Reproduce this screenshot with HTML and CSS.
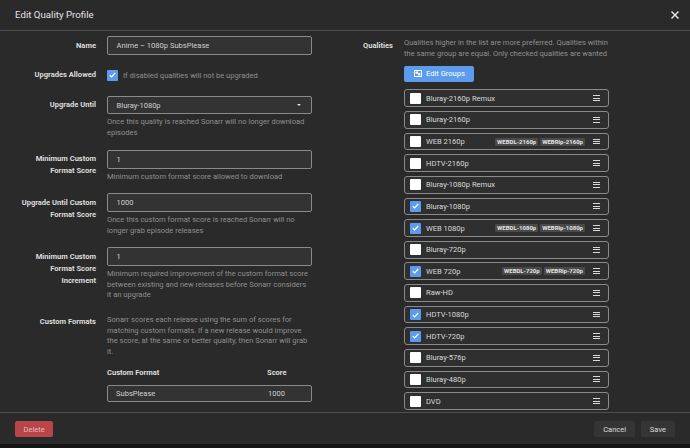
FILE: index.html
```html
<!DOCTYPE html>
<html lang="en">
<head>
<meta charset="utf-8">
<title>Edit Quality Profile</title>
<link rel="stylesheet" href="styles.css">
</head>
<body>
<div class="modal">
  <header class="modal-header">
    <h1 class="modal-title">Edit Quality Profile</h1>
    <button class="close" aria-label="Close">
      <svg width="8" height="8" viewBox="0 0 8 8"><path d="M1 1L7 7M7 1L1 7" stroke="#e8e8e8" stroke-width="1.4" stroke-linecap="square"/></svg>
    </button>
  </header>

  <div class="modal-body" id="modal-body">
    <div class="columns">
      <div class="col">
        <div class="group">
          <div class="label">Name</div>
          <div class="control"><div class="input">Anime – 1080p SubsPlease</div></div>
        </div>

        <div class="group">
          <div class="label">Upgrades Allowed</div>
          <div class="control check-control">
            <span class="checkbox checked"><svg width="7" height="6" viewBox="0 0 7 6"><path d="M0.8 3.2L2.7 5L6.2 1" fill="none" stroke="#fff" stroke-width="1.2"/></svg></span>
            <span class="help-inline">If disabled qualities will not be upgraded</span>
          </div>
        </div>

        <div class="group">
          <div class="label">Upgrade Until</div>
          <div class="control">
            <div class="input select"><span>Bluray-1080p</span><span class="caret"></span></div>
            <div class="help">Once this quality is reached Sonarr will no longer download episodes</div>
          </div>
        </div>

        <div class="group">
          <div class="label">Minimum Custom Format Score</div>
          <div class="control">
            <div class="input">1</div>
            <div class="help">Minimum custom format score allowed to download</div>
          </div>
        </div>

        <div class="group">
          <div class="label">Upgrade Until Custom Format Score</div>
          <div class="control">
            <div class="input">1000</div>
            <div class="help">Once this custom format score is reached Sonarr will no longer grab episode releases</div>
          </div>
        </div>

        <div class="group">
          <div class="label">Minimum Custom Format Score Increment</div>
          <div class="control">
            <div class="input">1</div>
            <div class="help">Minimum required improvement of the custom format score between existing and new releases before Sonarr considers it an upgrade</div>
          </div>
        </div>

        <div class="group">
          <div class="label">Custom Formats</div>
          <div class="control">
            <div class="help">Sonarr scores each release using the sum of scores for matching custom formats. If a new release would improve the score, at the same or better quality, then Sonarr will grab it.</div>
            <div class="cf-head"><span>Custom Format</span><span>Score</span></div>
            <div class="cf-row"><span>SubsPlease</span><span>1000</span></div>
          </div>
        </div>
      </div>

      <div class="col">
        <div class="group">
          <div class="label">Qualities</div>
          <div class="control">
            <div class="help help-top">Qualities higher in the list are more preferred. Qualities within the same group are equal. Only checked qualities are wanted</div>
            <button class="btn-primary">
              <svg width="8" height="7" viewBox="0 0 8 7"><rect x="0.5" y="0.5" width="7" height="6" fill="none" stroke="#fff" stroke-width="1"/><rect x="1.6" y="1.5" width="2.6" height="2.2" fill="#fff"/><rect x="4" y="3.2" width="2.4" height="2.2" fill="#fff"/></svg>
              Edit Groups
            </button>
            <ul class="qualities">
              <li class="q"><span class="checkbox"></span><span class="q-name">Bluray-2160p Remux</span><span class="handle"></span></li>
              <li class="q"><span class="checkbox"></span><span class="q-name">Bluray-2160p</span><span class="handle"></span></li>
              <li class="q"><span class="checkbox"></span><span class="q-name">WEB 2160p</span><span class="tags"><span class="tag">WEBDL-2160p</span><span class="tag">WEBRip-2160p</span></span><span class="handle"></span></li>
              <li class="q"><span class="checkbox"></span><span class="q-name">HDTV-2160p</span><span class="handle"></span></li>
              <li class="q"><span class="checkbox"></span><span class="q-name">Bluray-1080p Remux</span><span class="handle"></span></li>
              <li class="q"><span class="checkbox checked"><svg width="7" height="6" viewBox="0 0 7 6"><path d="M0.8 3.2L2.7 5L6.2 1" fill="none" stroke="#fff" stroke-width="1.2"/></svg></span><span class="q-name">Bluray-1080p</span><span class="handle"></span></li>
              <li class="q"><span class="checkbox checked"><svg width="7" height="6" viewBox="0 0 7 6"><path d="M0.8 3.2L2.7 5L6.2 1" fill="none" stroke="#fff" stroke-width="1.2"/></svg></span><span class="q-name">WEB 1080p</span><span class="tags"><span class="tag">WEBDL-1080p</span><span class="tag">WEBRip-1080p</span></span><span class="handle"></span></li>
              <li class="q"><span class="checkbox"></span><span class="q-name">Bluray-720p</span><span class="handle"></span></li>
              <li class="q"><span class="checkbox checked"><svg width="7" height="6" viewBox="0 0 7 6"><path d="M0.8 3.2L2.7 5L6.2 1" fill="none" stroke="#fff" stroke-width="1.2"/></svg></span><span class="q-name">WEB 720p</span><span class="tags"><span class="tag">WEBDL-720p</span><span class="tag">WEBRip-720p</span></span><span class="handle"></span></li>
              <li class="q"><span class="checkbox"></span><span class="q-name">Raw-HD</span><span class="handle"></span></li>
              <li class="q"><span class="checkbox checked"><svg width="7" height="6" viewBox="0 0 7 6"><path d="M0.8 3.2L2.7 5L6.2 1" fill="none" stroke="#fff" stroke-width="1.2"/></svg></span><span class="q-name">HDTV-1080p</span><span class="handle"></span></li>
              <li class="q"><span class="checkbox checked"><svg width="7" height="6" viewBox="0 0 7 6"><path d="M0.8 3.2L2.7 5L6.2 1" fill="none" stroke="#fff" stroke-width="1.2"/></svg></span><span class="q-name">HDTV-720p</span><span class="handle"></span></li>
              <li class="q"><span class="checkbox"></span><span class="q-name">Bluray-576p</span><span class="handle"></span></li>
              <li class="q"><span class="checkbox"></span><span class="q-name">Bluray-480p</span><span class="handle"></span></li>
              <li class="q"><span class="checkbox"></span><span class="q-name">DVD</span><span class="handle"></span></li>
            </ul>
          </div>
        </div>
      </div>
    </div>
  </div>

  <footer class="modal-footer">
    <button class="btn btn-danger">Delete</button>
    <button class="btn">Cancel</button>
    <button class="btn">Save</button>
  </footer>
</div>
<script src="script.js"></script>
</body>
</html>
```

FILE: styles.css
```css
* { box-sizing: border-box; }
html, body { margin: 0; height: 100%; }
body {
  background: #141414;
  font-family: Roboto, "Noto Sans", "Liberation Sans", sans-serif;
  font-size: 7.56px;
  color: #cccccc;
  overflow: hidden;
}
button { font: inherit; color: inherit; border: 0; cursor: pointer; }

.modal {
  height: 444px;
  background: #2a2a2a;
  display: flex;
  flex-direction: column;
}

.modal-header {
  flex: none;
  height: 31px;
  border-bottom: 1px solid #4e4e4e;
  display: flex;
  align-items: center;
  justify-content: space-between;
  padding: 0 11px 0 15px;
}
.modal-title {
  margin: 0;
  font-size: 9.7px;
  font-weight: 400;
  line-height: 12px;
  color: #e4e4e4;
}
.close {
  background: none;
  padding: 0;
  width: 8px;
  height: 8px;
  display: flex;
}

.modal-body {
  flex: none;
  height: 381px;
  overflow-y: auto;
  padding: 16.2px 0 16.2px 15px;
}
.modal-body::-webkit-scrollbar { width: 6px; }
.modal-body::-webkit-scrollbar-track { background: #2a2a2a; }
.modal-body::-webkit-scrollbar-thumb {
  background: #6e6e6e;
  border-left: 2px solid #2a2a2a;
}
.modal-body::-webkit-scrollbar-button:single-button:vertical {
  height: 6px;
  background-color: #2a2a2a;
  background-repeat: no-repeat;
}
.modal-body::-webkit-scrollbar-button:single-button:vertical:decrement {
  background-image:
    linear-gradient(to bottom right, transparent 50%, #9a9a9a 50%),
    linear-gradient(to bottom left, transparent 50%, #9a9a9a 50%);
  background-size: 2px 2px, 2px 2px;
  background-position: 2px 2px, 4px 2px;
}
.modal-body::-webkit-scrollbar-button:single-button:vertical:increment {
  background-image:
    linear-gradient(to top right, transparent 50%, #9a9a9a 50%),
    linear-gradient(to top left, transparent 50%, #9a9a9a 50%);
  background-size: 2px 2px, 2px 2px;
  background-position: 2px 2px, 4px 2px;
}

.columns { display: flex; }
.col { width: 297px; flex: none; }

.group {
  display: flex;
  margin-bottom: 10.8px;
}
.label {
  width: 92px;
  flex: none;
  padding: 3.6px 11px 0 0;
  text-align: right;
  font-weight: 700;
  line-height: 11.9px;
  color: #dddddd;
}
.control {
  width: 205px;
  flex: none;
}

.input {
  display: flex;
  align-items: center;
  height: 18.9px;
  padding: 0 8.6px;
  background: #333333;
  border: 1px solid #8a8a8a;
  border-radius: 2px;
  color: #d0d0d0;
}
.select { justify-content: space-between; }
.caret {
  width: 0;
  height: 0;
  border-left: 2.5px solid transparent;
  border-right: 2.5px solid transparent;
  border-top: 2.5px solid #e0e0e0;
  margin-right: 1px;
}

.help {
  margin-top: 3px;
  line-height: 10.7px;
  color: #8f8f8f;
}
.help-top {
  margin-top: 2.3px;
  width: 210px;
}

.check-control {
  display: flex;
  align-items: center;
  height: 18.9px;
  gap: 5px;
}
.help-inline { color: #8f8f8f; }

.checkbox {
  width: 11px;
  height: 11px;
  flex: none;
  background: #ffffff;
  border-radius: 1px;
  display: flex;
  align-items: center;
  justify-content: center;
}
.checkbox.checked { background: #5d9cec; }

.cf-head {
  display: grid;
  grid-template-columns: 160px auto;
  margin-top: 9.2px;
  line-height: 11.9px;
  font-weight: 700;
  color: #dddddd;
}
.cf-row {
  display: grid;
  grid-template-columns: 152px auto;
  align-items: center;
  margin-top: 6px;
  height: 16.7px;
  padding-left: 8px;
  background: #333333;
  border: 1px solid #8a8a8a;
  border-radius: 2px;
  color: #d0d0d0;
}

.btn-primary {
  display: inline-flex;
  align-items: center;
  gap: 4px;
  margin-top: 5.9px;
  height: 16.4px;
  padding: 0 9px 0 10px;
  background: #5d9cec;
  border-radius: 2px;
  color: #ffffff;
}

.qualities {
  list-style: none;
  margin: 7.3px 0 0;
  padding: 0;
}
.q {
  display: flex;
  align-items: center;
  height: 17.7px;
  margin-bottom: 3.94px;
  padding: 0 8px 0 5px;
  background: #2f2f2f;
  border: 1px solid #8a8a8a;
  border-radius: 3px;
  color: #dadada;
}
.q .checkbox { margin-right: 5px; }
.q-name { flex: 1; }
.tags {
  display: flex;
  gap: 2px;
  margin-right: 8px;
}
.tag {
  font-size: 6px;
  font-weight: 700;
  line-height: 8px;
  padding: 0 2px;
  background: #4a4a4a;
  border-radius: 1px;
  color: #e4e4e4;
}
.handle {
  width: 7px;
  height: 6px;
  flex: none;
  background:
    linear-gradient(#d8d8d8, #d8d8d8) 0 0 / 7px 1.1px no-repeat,
    linear-gradient(#d8d8d8, #d8d8d8) 0 2.45px / 7px 1.1px no-repeat,
    linear-gradient(#d8d8d8, #d8d8d8) 0 4.9px / 7px 1.1px no-repeat;
}

.modal-footer {
  flex: none;
  height: 32px;
  border-top: 1px solid #4e4e4e;
  display: flex;
  align-items: center;
  gap: 5.7px;
  padding: 1px 15px 0;
}
.btn {
  height: 16px;
  padding: 0 9px;
  border-radius: 2px;
  background: #353535;
  color: #dcdcdc;
}
.btn-danger {
  margin-right: auto;
  padding: 0 8.5px;
  background: #b84648;
  color: #e9b7b7;
}
```

FILE: script.js
```js
document.getElementById('modal-body').scrollTop = 11;
```
